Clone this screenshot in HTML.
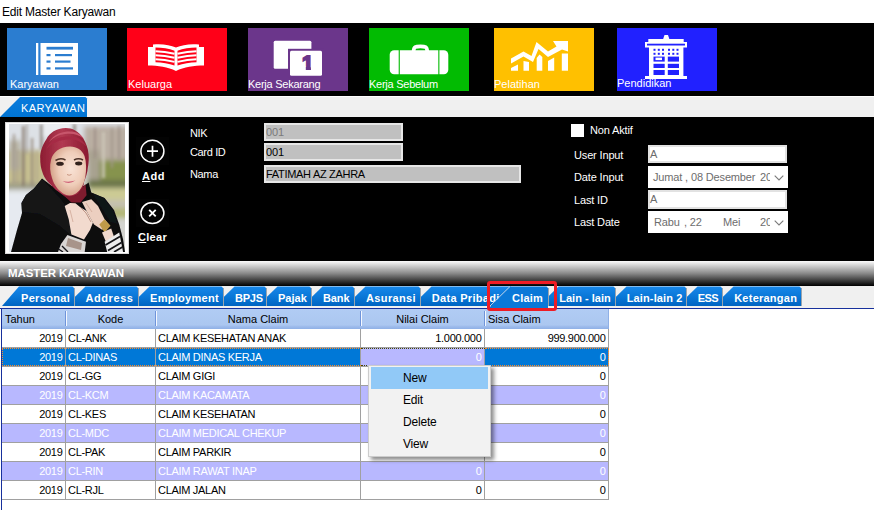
<!DOCTYPE html>
<html lang="id">
<head>
<meta charset="utf-8">
<title>Edit Master Karyawan</title>
<style>
*{box-sizing:border-box;margin:0;padding:0}
html,body{width:874px;height:510px;overflow:hidden;background:#fff}
body{position:relative;font-family:"Liberation Sans",sans-serif;font-size:11px;color:#000}
.abs{position:absolute}
.t{position:absolute;white-space:nowrap;line-height:13px}
#title{left:2px;top:5px;font-size:12px;line-height:15px;letter-spacing:-0.2px}
#band1{left:0;top:23px;width:874px;height:73px;background:#000}
.tile{position:absolute;top:28px;width:100px;height:62px}
.tile .t{color:#fff;top:50px;font-size:11px;line-height:13px}
.tile svg{position:absolute;left:0;top:0}
#band2{left:0;top:96px;width:874px;height:21px;background:#f0f0f0;border-top:1px solid #fff}
#panel{left:0;top:117px;width:874px;height:144px;background:#000}
.lbl{color:#fff;letter-spacing:-0.35px}
.lbl2{color:#fff;letter-spacing:-0.15px}
.inp{position:absolute;background:#c0c0c0;border:2px solid #e6e6e6}
.inp .t{left:0px;top:1px;line-height:13px;letter-spacing:-0.1px}
.winp{position:absolute;background:#fff;border:2px solid #e2e2e2}
.winp .t{left:0px;top:1px;color:#6d6d6d}
.dt{position:absolute;background:#fff}
.dt .t{color:#6d6d6d;top:5px;letter-spacing:-0.15px}
#band3{left:0;top:261px;width:874px;height:25px;background:linear-gradient(#fcfcfc 0%,#888 50%,#000 100%)}
#tabsbg{left:0;top:286px;width:874px;height:23px;background:#f0f0f0}
.tabt{position:absolute;top:292px;color:#fff;font-weight:bold;font-size:11px;line-height:13px;white-space:nowrap;letter-spacing:0.42px}
.cell{position:absolute;height:19px;line-height:18px;font-size:11px;white-space:nowrap;overflow:hidden;letter-spacing:-0.3px}
.r{text-align:right;padding-right:2.5px}
.l{text-align:left;padding-left:2px}
#menu{left:368px;top:365px;width:123px;height:92px;background:#f2f2f2;border:1px solid #cccccc;box-shadow:3px 3px 4px rgba(0,0,0,.45)}
#menu .t{left:34px;font-size:12px;line-height:15px;letter-spacing:-0.2px}
</style>
</head>
<body>
<div id="title" class="t">Edit Master Karyawan</div>
<div id="band1" class="abs"></div>
<div id="band2" class="abs"></div>
<div class="tile" style="left:7px;background:#2b7dd0">
<svg width="100" height="62" viewBox="7 28 100 62">
<rect x="36" y="43" width="2.3" height="32" fill="#fff"/>
<rect x="40.5" y="43" width="37.5" height="32" fill="#fff"/>
<rect x="46.5" y="46.8" width="26.5" height="2.8" fill="#2b7dd0"/>
<rect x="46.5" y="54" width="4" height="2.2" fill="#2b7dd0"/><rect x="55" y="54" width="17" height="2.2" fill="#2b7dd0"/>
<rect x="46.5" y="60.5" width="4" height="2.2" fill="#2b7dd0"/><rect x="55" y="60.5" width="15.5" height="2.2" fill="#2b7dd0"/>
<rect x="46.5" y="67.3" width="4" height="2.2" fill="#2b7dd0"/><rect x="55" y="67.3" width="18" height="2.2" fill="#2b7dd0"/>
</svg>
<div class="t" style="left:3px">Karyawan</div></div>

<div class="tile" style="left:127px;height:63px;background:#ff0018">
<svg width="100" height="62" viewBox="127 28 100 62">
<path d="M148 47 L153 47 L153 44.5 C162 43.5 170 45 176 47.5 C182 45 190 43.5 199 44.5 L199 47 L204 47 L204 65.5 C194 65.5 184 67 176 71 C168 67 158 65.500 148 65.500 Z" fill="#fff"/>
<path d="M155.500 47.500 C162 47.500 169 48.500 174.500 50.800 L174.500 65.500 C169 63.500 162 62.500 155.500 62.300 Z" fill="#ff0018"/>
<path d="M196.500 47.500 C190 47.500 183 48.500 177.500 50.800 L177.500 65.500 C183 63.500 190 62.500 196.500 62.300 Z" fill="#ff0018"/>
<g stroke="#fff" stroke-width="2" fill="none">
<path d="M155.500 51.2 C162 51.4 168 52.3 174.500 53.8"/><path d="M196.500 51.2 C190 51.4 184 52.3 177.500 53.8"/><path d="M155.500 55.2 C162 55.4 168 56.3 174.500 57.8"/><path d="M196.500 55.2 C190 55.4 184 56.3 177.500 57.8"/><path d="M155.500 59.3 C162 59.5 168 60.4 174.500 61.9"/><path d="M196.500 59.3 C190 59.5 184 60.4 177.500 61.9"/>
</g>
</svg>
<div class="t" style="left:1px">Keluarga</div></div>

<div class="tile" style="left:248px;height:63px;background:#6b368b">
<svg width="100" height="62" viewBox="248 28 100 62">
<rect x="273.700" y="40.800" width="37.700" height="28" rx="1.500" fill="#fff"/>
<rect x="288" y="48.800" width="36" height="29" fill="#6b368b"/>
<rect x="290" y="50.800" width="32" height="25" rx="1.500" fill="#fff"/>
<clipPath id="c1"><rect x="296" y="50" width="14.800" height="20.100"/></clipPath>
<g clip-path="url(#c1)"><text x="302" y="70" style="font-family:'Liberation Sans',sans-serif;font-weight:bold;font-size:21px" fill="#6b368b" stroke="#6b368b" stroke-width="1.900" stroke-linejoin="miter">1</text></g>
<rect x="296" y="66.500" width="9.800" height="5" fill="#fff"/>
</svg>
<div class="t" style="left:0px;letter-spacing:-0.250px">Kerja Sekarang</div></div>

<div class="tile" style="left:369px;height:63px;background:#02bb02">
<svg width="100" height="62" viewBox="369 28 100 62">
<path d="M413.600 51.500 C413.600 46.600 415.500 46.300 420.400 46.300 C425.300 46.300 427.200 46.600 427.200 51.500" stroke="#fff" stroke-width="3.700" fill="none"/>
<rect x="389.700" y="50.300" width="58.600" height="24" rx="4.500" fill="#fff"/>
<rect x="398.700" y="50" width="1.100" height="25" fill="#02bb02"/>
<rect x="438.300" y="50" width="1.100" height="25" fill="#02bb02"/>
</svg>
<div class="t" style="left:0px;letter-spacing:-0.250px">Kerja Sebelum</div></div>

<div class="tile" style="left:494px;height:63px;background:#ffc000">
<svg width="100" height="62" viewBox="494 28 100 62">
<path d="M511 58.500 L523.500 51.500 L531.500 56 L536.500 42 L548 51.500 L556.500 46.500 L553 41 L568 41 L568 51.500 L562 49.500 L548 57 L538.500 49 L533 62 L523.500 56.500 L511 63.500 Z" fill="#fff"/>
<path d="M511 68 L518 64.500 L518 70.700 L511 70.700 Z" fill="#fff"/>
<path d="M523.500 61 L529 62 L529 70.700 L523.500 70.700 Z" fill="#fff"/>
<path d="M536.700 58 L539.500 54.500 L542.300 57 L542.300 70.700 L536.700 70.700 Z" fill="#fff"/>
<path d="M548 61 L554.200 57.500 L554.200 70.700 L548 70.700 Z" fill="#fff"/>
<path d="M561.800 53.500 L568 53.500 L568 70.700 L561.800 70.700 Z" fill="#fff"/>
</svg>
<div class="t" style="left:0px">Pelatihan</div></div>

<div class="tile" style="left:617px;height:63px;background:#2121ff">
<svg width="100" height="62" viewBox="617 28 100 62">
<path d="M663 39.500 L664.500 35 L668 35 L669.500 39.500 Z" fill="#fff"/>
<rect x="648.300" y="39" width="35.400" height="3.500" fill="#fff"/>
<rect x="645" y="42" width="42" height="5.500" fill="#fff"/>
<rect x="647" y="43.700" width="38" height="1.800" fill="#2121ff"/>
<rect x="649" y="47" width="34.400" height="29.500" fill="#fff"/>
<rect x="645" y="76" width="42" height="3" fill="#fff"/>
<g fill="#2121ff">
<rect x="653.500" y="48.800" width="2" height="2"/><rect x="657.800" y="48.800" width="2" height="2"/><rect x="662" y="48.800" width="2" height="2"/><rect x="668" y="48.800" width="2" height="2"/><rect x="672.300" y="48.800" width="2" height="2"/><rect x="676.500" y="48.800" width="2" height="2"/>
<rect x="653.500" y="52.800" width="2" height="2"/><rect x="657.800" y="52.800" width="2" height="2"/><rect x="662" y="52.800" width="2" height="2"/><rect x="668" y="52.800" width="2" height="2"/><rect x="672.300" y="52.800" width="2" height="2"/><rect x="676.500" y="52.800" width="2" height="2"/>
<rect x="653.500" y="56.600" width="11.200" height="5"/><rect x="667.800" y="56.600" width="11.200" height="5"/>
<rect x="653.500" y="63.800" width="11.200" height="4.200"/><rect x="667.800" y="63.800" width="11.200" height="4.200"/>
<rect x="653.500" y="70" width="11.200" height="5"/><rect x="667.800" y="70" width="11.200" height="5"/>
</g>
<rect x="655.500" y="57.600" width="6.500" height="2.500" fill="#fff"/>
</svg>
<div class="t" style="left:0px;top:49px">Pendidikan</div></div>

<svg class="abs" style="left:0;top:96px" width="100" height="22" viewBox="0 96 100 22">
<defs><linearGradient id="kg" x1="0" y1="0" x2="0" y2="1"><stop offset="0" stop-color="#0a7bdc"/><stop offset="1" stop-color="#0074d2"/></linearGradient></defs>
<path d="M0 117 L20 97 L85.500 97 L87 98.500 L87 117 Z" fill="url(#kg)"/>
</svg>
<div class="t" style="left:21px;top:102px;color:#fff;font-size:11px;letter-spacing:0.4px">KARYAWAN</div>
<div id="panel" class="abs"></div>
<!-- photo frame -->
<div class="abs" style="left:5px;top:122px;width:124px;height:132px;background:#fff;border:1px solid #d8d8d8"></div>
<svg class="abs" style="left:9px;top:124px" width="116" height="128" viewBox="9 124 116 128">
<defs>
<filter id="b4" x="-20%" y="-20%" width="140%" height="140%"><feGaussianBlur stdDeviation="2.6"/></filter>
<filter id="b1" x="-20%" y="-20%" width="140%" height="140%"><feGaussianBlur stdDeviation="0.7"/></filter>
<filter id="b2" x="-20%" y="-20%" width="140%" height="140%"><feGaussianBlur stdDeviation="1.5"/></filter>
<clipPath id="pc"><rect x="9" y="124" width="116" height="128"/></clipPath>
<radialGradient id="fg" cx="0.58" cy="0.45" r="0.62"><stop offset="0" stop-color="#f9e3d6"/><stop offset="0.55" stop-color="#efcdb9"/><stop offset="1" stop-color="#cf9a80"/></radialGradient>
<linearGradient id="hg" x1="0" y1="0" x2="1" y2="0"><stop offset="0" stop-color="#8c1c32"/><stop offset="0.45" stop-color="#b23a52"/><stop offset="1" stop-color="#8a1a30"/></linearGradient>
</defs>
<g clip-path="url(#pc)">
<rect x="9" y="124" width="116" height="128" fill="#cfd0ca"/>
<g filter="url(#b4)">
<rect x="0" y="116" width="135" height="34" fill="#dde1e6"/>
<rect x="84" y="126" width="46" height="34" fill="#b9aea2"/>
<rect x="0" y="150" width="46" height="38" fill="#c6bf90"/>
<rect x="9" y="140" width="12" height="30" fill="#b8b4a4"/>
<rect x="94" y="160" width="40" height="26" fill="#86934e"/>
<rect x="88" y="150" width="12" height="30" fill="#a8a290"/>
<rect x="88" y="180" width="46" height="8" fill="#6a7448"/>
<rect x="0" y="183" width="44" height="6" fill="#9a9a84"/>
<rect x="0" y="191" width="40" height="70" fill="#e6eaf0"/>
<rect x="90" y="188" width="44" height="12" fill="#cccb94"/>
<rect x="100" y="200" width="34" height="12" fill="#c4c0b0"/>
<rect x="112" y="208" width="20" height="10" fill="#b4b878"/>
<rect x="112" y="220" width="20" height="40" fill="#d4d4d0"/>
</g>
<g filter="url(#b2)" opacity="0.85">
<rect x="40" y="116" width="30" height="20" fill="#eef0f3"/>
<rect x="22" y="126" width="2.600" height="60" fill="#83766a"/>
<rect x="31" y="138" width="2.200" height="48" fill="#94877a"/>
<rect x="13" y="134" width="2" height="50" fill="#9c9286"/>
<rect x="40" y="124" width="3" height="26" fill="#8c847c"/>
<rect x="73" y="124" width="3" height="8" fill="#8c847c"/>
<rect x="102" y="132" width="3" height="46" fill="#d0cabc"/>
<rect x="111" y="128" width="2" height="40" fill="#a2968c"/>
<rect x="17" y="150" width="1.500" height="34" fill="#a09482"/>
<rect x="36" y="150" width="1.500" height="30" fill="#a89c88"/>
<rect x="26" y="124" width="1.500" height="30" fill="#9a9088"/>
<rect x="94" y="128" width="2" height="30" fill="#9c8c84"/>
<rect x="118" y="126" width="2" height="34" fill="#9c9088"/>
</g>
<g filter="url(#b1)">
<!-- coat -->
<path d="M11 252 L17 230 L22 213 L21.500 203 L26 195 L34 188.500 L42 178.500 L52 186 L84 186 L88.600 182.400 L91.300 192.600 L104.600 198 L114 210 L119.200 224.500 L123 239 L125 252 Z" fill="#0c0c0f"/>
<path d="M22 212 L21.500 203 L26 195 L34 188.500 L42 179 L60 198 L70 212 L72 236 L60 226 L40 214 Z" fill="#131418"/>
<path d="M92 193 L104 198 L113 210 L118 224 L110 222 L100 206 Z" fill="#111215"/>
<!-- hijab -->
<path d="M66 128 C56 128 49.500 133 46.500 139 C42 146 40 152 40.200 158 C40.200 164 41 168 42 171 C43.500 176 45.500 179 47.500 181.500 L56 190 L70 200 L82 196 L84 182 C86 177 87.500 172 87.800 168 C88.800 163 88.900 158 88.600 154.500 C88 148 86 143 83.300 138.600 C79 131 72 128 66 128 Z" fill="url(#hg)"/>
<path d="M49 142 C54 134 62 131.500 70 131.500 C76 131.500 81 134 84 139 C79 135 74 133.500 68 133.800 C60 134 54 137 49 142 Z" fill="#c8566c"/>
<path d="M46 150 C50 140 60 135.500 72 136.500 C79 137 84 141 86.500 147 C82 142 77 139.500 70 139.500 C59 139.500 51 143 46 150 Z" fill="#a62c45"/>
<!-- face -->
<path d="M70 146.600 C60 146.600 53 152 51 160 C49.500 166 50 172 52 178 C54 185 58 190 63 193.500 C67 196 72 196 76 193.500 C81 190 84 184 85.300 177 C86.500 170 86.500 162 84.500 156 C82 150 77 146.600 70 146.600 Z" fill="url(#fg)"/>
<!-- scarf at neck -->
<path d="M62 194 C67 197 73 197 78 193.500 L85.500 184 L86.600 195.300 L80.700 202.500 L71.400 202.500 L66 197.500 Z" fill="#7e1a2e"/>
<!-- eyes -->
<ellipse cx="60" cy="163.800" rx="3.800" ry="2" fill="#33211c"/>
<ellipse cx="78.700" cy="163.500" rx="3.600" ry="1.900" fill="#33211c"/>
<path d="M55.500 160.500 Q60.500 157.500 65.500 160" stroke="#4e342a" stroke-width="1.500" fill="none"/>
<path d="M74 160 Q78.500 157.500 83 160" stroke="#4e342a" stroke-width="1.500" fill="none"/>
<path d="M67 174.500 Q69 176 71.500 174.500" stroke="#c99580" stroke-width="1" fill="none"/>
<!-- mouth -->
<path d="M62.500 181 Q69 182.500 75.400 180.500 Q69 185 62.500 181 Z" fill="#cf5f78"/>
<!-- hands -->
<path d="M64.700 205.900 L70 203 L75.400 203.300 L80 207 L86.500 211 L93 222.500 L90 230 L84 239.500 L71.400 234.500 L68.700 219.200 Z" fill="#f2dace"/>
<path d="M82 202 L91.300 199.300 L98 206 L104.600 219.200 L110 225.800 L102 229.800 L94 224.500 L87.300 212.500 Z" fill="#eccfc0"/>
<path d="M80 207 L86 213 L91 222" stroke="#b89080" stroke-width="0.900" fill="none"/><path d="M70 210 L73 222 M86 203 L92 212" stroke="#d0a898" stroke-width="0.800" fill="none"/>
<!-- watch -->
<path d="M99.300 224.500 L104.600 219.200 L110.500 225.800 L104.600 232.500 Z" fill="#bf9a48"/>
<path d="M102 232.500 L111.200 228.500 L113.900 236.400 L105.900 241.700 Z" fill="#f0d8cc"/>
<!-- sleeves -->
<path d="M67.400 235.100 L86 241.700 L84.700 252 L58 252 L61 244 Z" fill="#d9d5d3"/>
<path d="M68 238 L82 243 L81 250 L66 246 Z" fill="#a8948a"/>
<path d="M62 246 L68 252 M58.500 249 L63 252" stroke="#16161a" stroke-width="1.400"/>
<path d="M104.600 241.700 L119.200 232.500 L123.100 252 L107.200 252 Z" fill="#ececec"/>
<path d="M105.500 245 L120 236.500 M108 250.500 L121.500 242.500 M114 252 L122.500 247" stroke="#141418" stroke-width="1.700"/>
</g>
</g>
</svg>

<!-- Add / Clear -->
<svg class="abs" style="left:136px;top:136px" width="34" height="94" viewBox="136 136 34 94">
<rect x="136" y="137" width="33" height="28" fill="#030303"/>
<rect x="136" y="199" width="33" height="28" fill="#030303"/>
<ellipse cx="152.400" cy="151.200" rx="11.500" ry="11" fill="none" stroke="#fff" stroke-width="1.500"/>
<path d="M147 151.200 H158 M152.500 145.700 V156.700" stroke="#fff" stroke-width="1.700"/>
<ellipse cx="152.400" cy="213" rx="11.500" ry="10.500" fill="none" stroke="#fff" stroke-width="1.500"/>
<path d="M149.200 209.800 L155.700 216.300 M155.700 209.800 L149.200 216.300" stroke="#fff" stroke-width="1.900"/>
</svg>
<div class="t lbl" style="left:142px;top:170px;font-weight:bold;font-size:11px;letter-spacing:0.5px"><u>A</u>dd</div>
<div class="t lbl" style="left:138px;top:231px;font-weight:bold;font-size:11px;letter-spacing:0.3px"><u>C</u>lear</div>

<!-- left fields -->
<div class="t lbl" style="left:190px;top:127px">NIK</div>
<div class="t lbl" style="left:190px;top:146px">Card ID</div>
<div class="t lbl" style="left:190px;top:168px">Nama</div>
<div class="inp" style="left:264px;top:123px;width:139px;height:18px"><div class="t" style="color:#7a7a7a">001</div></div>
<div class="inp" style="left:264px;top:143px;width:139px;height:18px"><div class="t">001</div></div>
<div class="inp" style="left:264px;top:165px;width:257px;height:18px"><div class="t" style="letter-spacing:-0.3px">FATIMAH AZ ZAHRA</div></div>

<!-- right fields -->
<div class="abs" style="left:571px;top:124px;width:13px;height:13px;background:#fff"></div>
<div class="t lbl2" style="left:590px;top:124px">Non Aktif</div>
<div class="t lbl2" style="left:574px;top:149px">User Input</div>
<div class="t lbl2" style="left:574px;top:171px">Date Input</div>
<div class="t lbl2" style="left:574px;top:194px">Last ID</div>
<div class="t lbl2" style="left:574px;top:216px">Last Date</div>
<div class="winp" style="left:648px;top:145px;width:139px;height:18px"><div class="t">A</div></div>
<div class="dt" style="left:648px;top:166px;width:140px;height:22px"><div class="t" style="left:5px">Jumat , 08 Desember</div><div class="abs" style="left:112px;top:0px;width:10px;height:22px;overflow:hidden"><div class="t" style="left:0">20</div></div>
<svg class="abs" style="left:126px;top:9px" width="10" height="7"><path d="M0.700 0.700 L5 5 L9.300 0.700" stroke="#7a7a7a" fill="none" stroke-width="1.100"/></svg></div>
<div class="winp" style="left:648px;top:190px;width:139px;height:19px"><div class="t">A</div></div>
<div class="dt" style="left:648px;top:211px;width:140px;height:22px"><div class="t" style="left:6px">Rabu</div><div class="t" style="left:36px">, 22</div><div class="t" style="left:75px">Mei</div><div class="abs" style="left:112px;top:0px;width:10px;height:22px;overflow:hidden"><div class="t" style="left:0">20</div></div>
<svg class="abs" style="left:126px;top:9px" width="10" height="7"><path d="M0.700 0.700 L5 5 L9.300 0.700" stroke="#7a7a7a" fill="none" stroke-width="1.100"/></svg></div>
<div id="band3" class="abs"></div>
<div class="t" style="left:8px;top:267px;color:#fff;font-weight:bold;font-size:11.5px;letter-spacing:-0.1px">MASTER KARYAWAN</div>
<div id="tabsbg" class="abs"></div>
<svg class="abs" style="left:0;top:285px" width="874" height="24" viewBox="0 285 874 24">
<defs><linearGradient id="tg" x1="0" y1="0" x2="0" y2="1"><stop offset="0" stop-color="#1787ea"/><stop offset="0.5" stop-color="#0a78d8"/><stop offset="1" stop-color="#0064c2"/></linearGradient></defs>
<path d="M713.5 306 L733.5 286.5 L799.5 286.5 L801 288.0 L801 306 Z" fill="url(#tg)"/>
<path d="M801.5 288.0 L801.5 306" stroke="#9aa4ae" stroke-width="1"/>
<path d="M677.5 306 L697.5 286.5 L720.5 286.5 L722 288.0 L722 306 Z" fill="url(#tg)"/>
<path d="M722.5 288.0 L722.5 306" stroke="#9aa4ae" stroke-width="1"/>
<path d="M606.5 306 L626.5 286.5 L684.5 286.5 L686 288.0 L686 306 Z" fill="url(#tg)"/>
<path d="M686.5 288.0 L686.5 306" stroke="#9aa4ae" stroke-width="1"/>
<path d="M538.5 306 L558.5 286.5 L613.5 286.5 L615 288.0 L615 306 Z" fill="url(#tg)"/>
<path d="M615.5 288.0 L615.5 306" stroke="#9aa4ae" stroke-width="1"/>
<path d="M411.5 306 L431.5 286.5 L510.5 286.5 L512 288.0 L512 306 Z" fill="url(#tg)"/>
<path d="M345.5 306 L365.5 286.5 L418.5 286.5 L420 288.0 L420 306 Z" fill="url(#tg)"/>
<path d="M420.5 288.0 L420.5 306" stroke="#9aa4ae" stroke-width="1"/>
<path d="M302.5 306 L322.5 286.5 L352.5 286.5 L354 288.0 L354 306 Z" fill="url(#tg)"/>
<path d="M354.5 288.0 L354.5 306" stroke="#9aa4ae" stroke-width="1"/>
<path d="M257.5 306 L277.5 286.5 L309.5 286.5 L311 288.0 L311 306 Z" fill="url(#tg)"/>
<path d="M311.5 288.0 L311.5 306" stroke="#9aa4ae" stroke-width="1"/>
<path d="M214.5 306 L234.5 286.5 L264.5 286.5 L266 288.0 L266 306 Z" fill="url(#tg)"/>
<path d="M266.5 288.0 L266.5 306" stroke="#9aa4ae" stroke-width="1"/>
<path d="M129.5 306 L149.5 286.5 L221.5 286.5 L223 288.0 L223 306 Z" fill="url(#tg)"/>
<path d="M223.5 288.0 L223.5 306" stroke="#9aa4ae" stroke-width="1"/>
<path d="M65.5 306 L85.5 286.5 L136.5 286.5 L138 288.0 L138 306 Z" fill="url(#tg)"/>
<path d="M138.5 288.0 L138.5 306" stroke="#9aa4ae" stroke-width="1"/>
<path d="M2 306 L19 286.5 L72.5 286.5 L74 288.0 L74 306 Z" fill="url(#tg)"/>
<path d="M74.5 288.0 L74.5 306" stroke="#9aa4ae" stroke-width="1"/>
</svg>
<div class="tabt" style="left:21.0px;letter-spacing:0.32px">Personal</div>
<div class="tabt" style="left:85.5px;letter-spacing:0.57px">Address</div>
<div class="tabt" style="left:150.0px;letter-spacing:0.3px">Employment</div>
<div class="tabt" style="left:235.0px;letter-spacing:-0.24px">BPJS</div>
<div class="tabt" style="left:278.0px;letter-spacing:0.01px">Pajak</div>
<div class="tabt" style="left:323.0px;letter-spacing:-0.13px">Bank</div>
<div class="tabt" style="left:366.0px;letter-spacing:0.37px">Asuransi</div>
<div class="tabt" style="left:431.8px;letter-spacing:0.3px">Data Pribadi</div>
<div class="tabt" style="left:559.2px;letter-spacing:0.03px">Lain - lain</div>
<div class="tabt" style="left:626.7px;letter-spacing:0.14px">Lain-lain 2</div>
<div class="tabt" style="left:697.7px;letter-spacing:-0.53px">ESS</div>
<div class="tabt" style="left:734.2px;letter-spacing:0.24px">Keterangan</div>
<svg class="abs" style="left:480px;top:285px" width="80" height="24" viewBox="480 285 80 24">
<path d="M488 308 L489 308 L510 286.5 L546.5 286.5 L548 288.0 L548 308 Z" fill="#0a78d8"/>
<path d="M489.5 306.5 L510 286.5" stroke="#c4d6ea" stroke-width="1" fill="none"/>
<path d="M548.5 288.0 L548.5 306" stroke="#9aa4ae" stroke-width="1"/>
</svg>
<div class="tabt" style="left:512.0px;letter-spacing:0.2px">Claim</div>
<div class="abs" style="left:0;top:308px;width:874px;height:1px;background:#17309c"></div>
<div class="abs" style="left:1px;top:308px;width:1px;height:202px;background:#17309c"></div>
<div class="abs" style="left:2px;top:309px;width:607px;height:20px;background:linear-gradient(#b1ccf4 0,#abc7f0 80%,#9dbbeb 88%,#8fb0e6 100%)"></div>
<div class="t" style="left:5px;top:313px">Tahun</div>
<div class="abs" style="left:65px;top:311px;width:1px;height:15px;background:#6f94da"></div><div class="abs" style="left:66px;top:311px;width:1px;height:15px;background:#f4f8ff"></div>
<div class="t" style="left:66px;top:313px;width:89px;text-align:center">Kode</div>
<div class="abs" style="left:155px;top:311px;width:1px;height:15px;background:#6f94da"></div><div class="abs" style="left:156px;top:311px;width:1px;height:15px;background:#f4f8ff"></div>
<div class="t" style="left:156px;top:313px;width:204px;text-align:center">Nama Claim</div>
<div class="abs" style="left:360px;top:311px;width:1px;height:15px;background:#6f94da"></div><div class="abs" style="left:361px;top:311px;width:1px;height:15px;background:#f4f8ff"></div>
<div class="t" style="left:361px;top:313px;width:123px;text-align:center">Nilai Claim</div>
<div class="abs" style="left:484px;top:311px;width:1px;height:15px;background:#6f94da"></div><div class="abs" style="left:485px;top:311px;width:1px;height:15px;background:#f4f8ff"></div>
<div class="t" style="left:488px;top:313px">Sisa Claim</div>
<div class="abs" style="left:608px;top:309px;width:1px;height:20px;background:#8fb0e6"></div>
<div class="abs" style="left:2px;top:329px;width:606px;height:18px;background:#fff"></div>
<div class="abs" style="left:2px;top:347px;width:607px;height:1px;background:#a0a0a0"></div>
<div class="cell r" style="left:2px;top:329px;width:63px;color:#000">2019</div>
<div class="cell l" style="left:66px;top:329px;width:89px;color:#000">CL-ANK</div>
<div class="cell l" style="left:156px;top:329px;width:204px;color:#000">CLAIM KESEHATAN ANAK</div>
<div class="cell r" style="left:361px;top:329px;width:123px;color:#000">1.000.000</div>
<div class="cell r" style="left:485px;top:329px;width:123px;color:#000">999.900.000</div>
<div class="abs" style="left:2px;top:348px;width:606px;height:18px;background:#0078d7"></div>
<div class="abs" style="left:361px;top:348px;width:123px;height:18px;background:#b8b8ff"></div>
<div class="abs" style="left:2px;top:366px;width:607px;height:1px;background:#a0a0a0"></div>
<div class="cell r" style="left:2px;top:348px;width:63px;color:#fff">2019</div>
<div class="cell l" style="left:66px;top:348px;width:89px;color:#fff">CL-DINAS</div>
<div class="cell l" style="left:156px;top:348px;width:204px;color:#fff">CLAIM DINAS KERJA</div>
<div class="cell r" style="left:361px;top:348px;width:123px;color:#fff">0</div>
<div class="cell r" style="left:485px;top:348px;width:123px;color:#fff">0</div>
<div class="abs" style="left:2px;top:367px;width:606px;height:18px;background:#fff"></div>
<div class="abs" style="left:2px;top:385px;width:607px;height:1px;background:#a0a0a0"></div>
<div class="cell r" style="left:2px;top:367px;width:63px;color:#000">2019</div>
<div class="cell l" style="left:66px;top:367px;width:89px;color:#000">CL-GG</div>
<div class="cell l" style="left:156px;top:367px;width:204px;color:#000">CLAIM GIGI</div>
<div class="cell r" style="left:485px;top:367px;width:123px;color:#000">0</div>
<div class="abs" style="left:2px;top:386px;width:606px;height:18px;background:#b8b8ff"></div>
<div class="abs" style="left:2px;top:404px;width:607px;height:1px;background:#a0a0a0"></div>
<div class="cell r" style="left:2px;top:386px;width:63px;color:#fff">2019</div>
<div class="cell l" style="left:66px;top:386px;width:89px;color:#fff">CL-KCM</div>
<div class="cell l" style="left:156px;top:386px;width:204px;color:#fff">CLAIM KACAMATA</div>
<div class="cell r" style="left:485px;top:386px;width:123px;color:#fff">0</div>
<div class="abs" style="left:2px;top:405px;width:606px;height:18px;background:#fff"></div>
<div class="abs" style="left:2px;top:423px;width:607px;height:1px;background:#a0a0a0"></div>
<div class="cell r" style="left:2px;top:405px;width:63px;color:#000">2019</div>
<div class="cell l" style="left:66px;top:405px;width:89px;color:#000">CL-KES</div>
<div class="cell l" style="left:156px;top:405px;width:204px;color:#000">CLAIM KESEHATAN</div>
<div class="cell r" style="left:485px;top:405px;width:123px;color:#000">0</div>
<div class="abs" style="left:2px;top:424px;width:606px;height:18px;background:#b8b8ff"></div>
<div class="abs" style="left:2px;top:442px;width:607px;height:1px;background:#a0a0a0"></div>
<div class="cell r" style="left:2px;top:424px;width:63px;color:#fff">2019</div>
<div class="cell l" style="left:66px;top:424px;width:89px;color:#fff">CL-MDC</div>
<div class="cell l" style="left:156px;top:424px;width:204px;color:#fff">CLAIM MEDICAL CHEKUP</div>
<div class="cell r" style="left:485px;top:424px;width:123px;color:#fff">0</div>
<div class="abs" style="left:2px;top:443px;width:606px;height:18px;background:#fff"></div>
<div class="abs" style="left:2px;top:461px;width:607px;height:1px;background:#a0a0a0"></div>
<div class="cell r" style="left:2px;top:443px;width:63px;color:#000">2019</div>
<div class="cell l" style="left:66px;top:443px;width:89px;color:#000">CL-PAK</div>
<div class="cell l" style="left:156px;top:443px;width:204px;color:#000">CLAIM PARKIR</div>
<div class="cell r" style="left:485px;top:443px;width:123px;color:#000">0</div>
<div class="abs" style="left:2px;top:462px;width:606px;height:18px;background:#b8b8ff"></div>
<div class="abs" style="left:2px;top:480px;width:607px;height:1px;background:#a0a0a0"></div>
<div class="cell r" style="left:2px;top:462px;width:63px;color:#fff">2019</div>
<div class="cell l" style="left:66px;top:462px;width:89px;color:#fff">CL-RIN</div>
<div class="cell l" style="left:156px;top:462px;width:204px;color:#fff">CLAIM RAWAT INAP</div>
<div class="cell r" style="left:361px;top:462px;width:123px;color:#fff">0</div>
<div class="cell r" style="left:485px;top:462px;width:123px;color:#fff">0</div>
<div class="abs" style="left:2px;top:481px;width:606px;height:18px;background:#fff"></div>
<div class="abs" style="left:2px;top:499px;width:607px;height:1px;background:#a0a0a0"></div>
<div class="cell r" style="left:2px;top:481px;width:63px;color:#000">2019</div>
<div class="cell l" style="left:66px;top:481px;width:89px;color:#000">CL-RJL</div>
<div class="cell l" style="left:156px;top:481px;width:204px;color:#000">CLAIM JALAN</div>
<div class="cell r" style="left:361px;top:481px;width:123px;color:#000">0</div>
<div class="cell r" style="left:485px;top:481px;width:123px;color:#000">0</div>
<div class="abs" style="left:65px;top:329px;width:1px;height:171px;background:#a0a0a0"></div>
<div class="abs" style="left:155px;top:329px;width:1px;height:171px;background:#a0a0a0"></div>
<div class="abs" style="left:360px;top:329px;width:1px;height:171px;background:#a0a0a0"></div>
<div class="abs" style="left:484px;top:329px;width:1px;height:171px;background:#a0a0a0"></div>
<div class="abs" style="left:608px;top:329px;width:1px;height:171px;background:#a0a0a0"></div>
<div class="abs" style="left:2px;top:348px;width:359px;height:18px;border-top:1px dotted #ff8c28;border-bottom:1px dotted #ff8c28;border-left:1px dotted #ff8c28"></div>
<div class="abs" style="left:485px;top:348px;width:124px;height:18px;border-top:1px dotted #ff8c28;border-bottom:1px dotted #ff8c28;border-right:1px dotted #ff8c28"></div>
<div class="abs" style="left:361px;top:348px;width:124px;height:18px;border-top:1px dotted #474700;border-bottom:1px dotted #474700"></div>
<div id="menu" class="abs"><div class="abs" style="left:2px;top:1px;width:117px;height:22px;background:#91c9f7"></div>
<div class="t" style="top:5px">New</div>
<div class="t" style="top:27px">Edit</div>
<div class="t" style="top:49px">Delete</div>
<div class="t" style="top:71px">View</div>
</div>
<div class="abs" style="left:487px;top:281px;width:70px;height:30px;border:3px solid #ee1c25;border-radius:3px"></div>
</body>
</html>
